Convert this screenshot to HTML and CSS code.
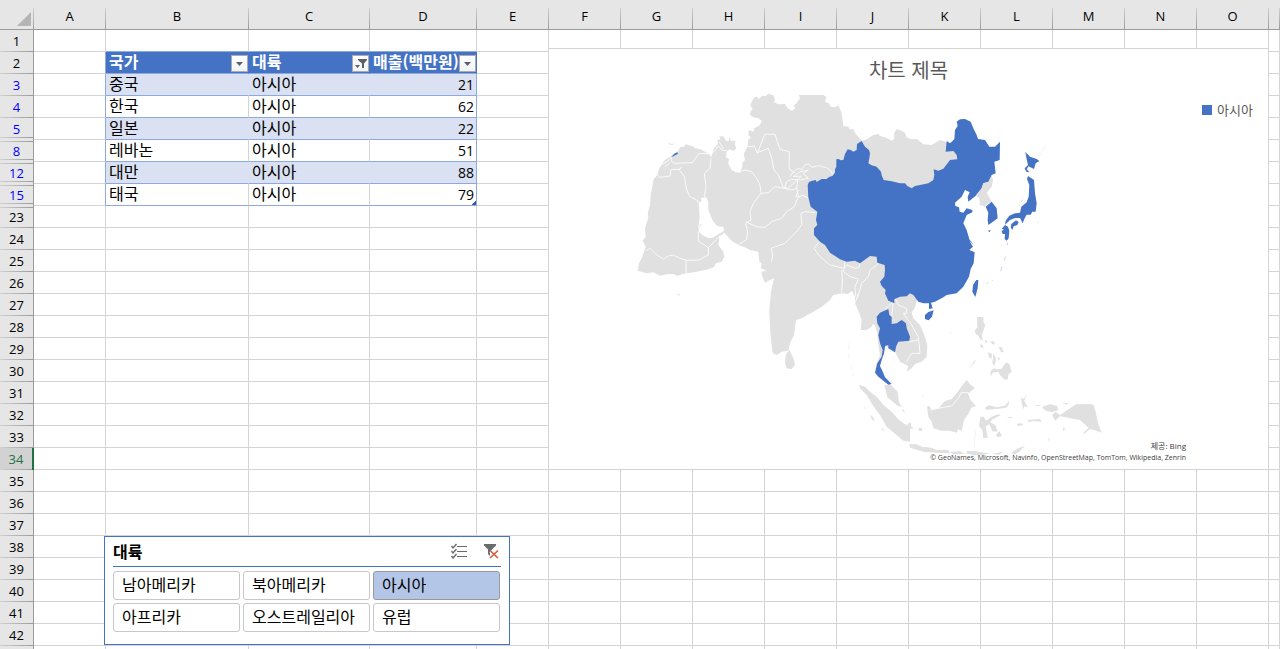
FILE: index.html
```html
<!DOCTYPE html>
<html lang="ko">
<head>
<meta charset="utf-8">
<title>대륙별 매출</title>
<link rel="stylesheet" href="styles.css">
</head>
<body>
<main class="sheet">
  <table class="grid">
    <colgroup id="cols"></colgroup>
    <thead><tr id="letters"></tr></thead>
    <tbody id="rows"></tbody>
  </table>

  <figure class="chart">
    <figcaption class="chart-title">차트 제목</figcaption>
    <div class="chart-body">
      <svg class="map" viewBox="12 39 1440 1104" role="img" aria-label="아시아 지도">
        <g class="land">
          <path d="M38,572 42,550 50,535 58,512 62,503 60,495 53,482 62,470 60,445 65,430 70,412 68,400 75,375 77,345 82,320 85,300 97,284 103,265 110,253 120,240 138,228 160,212 166,202 176,200 184,192 190,196 202,198 210,205 225,207 240,215 252,222 258,232 262,222 266,206 280,190 276,180 286,178 283,168 297,170 300,178 305,184 312,182 313,170 318,183 332,182 329,192 334,205 325,213 314,208 305,215 303,232 312,237 310,250 318,268 330,276 345,278 352,262 352,248 360,240 356,222 368,200 370,180 377,172 370,165 372,150 385,155 388,145 405,135 410,122 400,115 385,112 375,105 376,95 383,88 376,75 383,60 390,50 398,52 400,58 412,47 422,48 430,41 445,46 450,60 447,67 460,73 480,72 488,85 500,92 508,88 510,82 505,78 515,70 520,60 525,58 522,45 595,45 604,50 600,66 612,70 617,80 630,82 640,76 650,100 653,120 655,138 670,140 674,148 685,148 690,158 695,165 710,182 725,178 745,165 760,162 765,168 780,172 800,182 808,176 807,160 815,147 825,150 840,158 845,172 857,178 875,177 895,193 920,195 945,180 963,185 1000,230 980,500 875,663 870,682 860,698 865,715 885,735 898,765 907,795 905,830 890,845 870,852 860,865 845,875 850,858 825,845 815,825 810,815 790,805 785,798 780,805 777,820 770,840 750,875 755,850 765,825 760,795 757,760 750,735 744,732 740,740 725,750 707,750 710,720 703,700 690,670 690,650 680,632 670,642 650,640 625,645 615,660 590,680 565,695 530,715 513,720 507,765 495,790 490,812 470,815 455,825 443,820 437,770 435,740 433,690 438,635 447,595 435,600 420,608 410,585 410,575 425,572 407,565 410,550 403,545 400,515 375,510 360,502 345,497 320,483 298,458 292,464 279,470 283,478 280,495 295,515 298,530 290,545 272,550 268,560 250,568 215,575 185,580 155,587 145,582 125,583 105,587 85,577 65,580 Z"/>
          <path d="M130,188 138,191 150,191 141,195 132,193ZM155,642 161,642 168,647 160,646ZM493,810 505,835 510,855 500,868 485,865 480,850 482,825Z"/>
        </g>
        <path class="sea" d="M221,368 230,363 228,354 244,352 250,365 250,390 262,420 275,437 295,441 298,452 285,460 262,473 250,474 235,467 221,455 222,444 231,432 226,433 219,450 222,430 224,410Z"/>
        <g class="borders">
          <path d="M62,513 75,505 90,520 115,538 130,528 145,525 165,535 185,541 222,540 250,525 250,503 278,475M183,540V580M220,455V483L250,503M97,285 105,292 135,288 138,268 162,268 170,262M138,225 140,245 150,250 202,248 222,220 258,222M108,255 130,242 140,230M120,260 135,248M162,268 178,290 185,330 195,350 215,360 222,370M258,235 255,265 238,280 243,320 238,352M264,218 280,198 290,210 305,212M283,185 295,207"/>
          <path d="M345,275 360,270 380,275 395,295 405,315 408,340 385,370 375,395 378,420 362,430 368,455 365,478 340,495M408,340 430,338 450,320 478,325 500,330 515,325 520,350 508,380 485,395 470,415 440,425 420,442 395,440 362,425M440,545 443,525 438,505 460,497 480,490 510,460 530,435 528,400 540,395 570,398M370,200 388,198 397,220 420,162 450,163 465,208 493,215 492,260 495,270 510,278M397,218 418,210 430,205 440,235 447,270 460,285 475,322"/>
          <path d="M495,290 505,275 520,265 530,268 540,255 552,252 560,262 580,257 605,263 620,275 622,284M478,325 485,305 500,298 525,300 550,295 535,280 550,270 525,275 505,290 530,288 520,296M475,322 490,325 515,300M515,325 518,300M515,352 535,346 550,355M512,352 520,330"/>
          <path d="M582,485 567,505 585,530 615,555 657,565 660,545M657,565 665,555 690,565 702,563 704,550M650,570 652,600 650,640M657,566 655,575 675,590 700,597 690,620 692,650M697,655 710,610 730,590 735,570 755,555 768,545M810,655 820,675 845,685 845,700 835,700 860,735 880,770 885,820 860,820 845,845M853,785 880,780M780,688 805,665 800,712M690,670 700,640"/>
        </g>
        <path class="hit" d="M548,315 552,306 560,303 572,300 575,306 590,297 605,297 612,291 622,288 630,278 630,268 634,260 634,238 641,237 647,241 655,240 660,222 668,208 677,210 685,215 695,210 696,192 710,183 720,200 732,210 735,220 733,235 730,250 740,256 755,260 768,275 770,286 776,300 800,304 825,310 840,310 847,318 860,325 870,318 885,315 910,310 925,300 928,285 926,268 940,272 955,266 966,252 975,240 997,238 995,225 985,213 962,215 965,183 975,190 988,178 990,150 998,138 995,125 1005,118 1020,117 1037,125 1045,145 1055,165 1059,177 1080,180 1093,200 1110,200 1125,185 1124,240 1108,245 1112,280 1100,285 1092,305 1075,310 1070,325 1055,345 1030,365 1028,350 1034,337 1020,330 1010,350 990,368 991,378 1002,382 1004,395 1015,398 1025,385 1042,390 1042,397 1025,405 1015,430 1025,450 1033,478 1047,495 1033,482 1044,500 1033,510 1049,517 1046,550 1037,567 1032,590 1015,620 995,640 965,645 955,652 930,665 918,668 923,685 912,687 912,670 895,670 880,665 865,645 855,640 845,649 825,650 808,658 808,670 790,662 780,640 782,630 770,618 765,605 778,590 780,570 779,555 757,548 755,530 735,528 705,550 690,542 665,545 645,538 615,518 600,495 585,485 567,465 567,445 577,435 573,420 577,395 557,380 550,352Z"/>
        <path class="hit" d="M755,710 765,698 790,687 793,705 800,710 800,732 815,730 830,720 843,730 845,745 855,770 853,782 820,785 813,800 810,817 790,805 790,795 780,798 777,820 770,840 765,858 772,872 780,892 800,912 790,914 775,902 760,890 750,878 757,850 770,830 773,810 765,790 760,765 765,745 757,730Z"/>
        <path class="hit" d="M138,231 150,220 158,217 158,222 145,229ZM926,691 921,710 911,721 900,717 900,705 910,696Z"/>
        <g transform="translate(825 60)">
          <path class="land" d="M275,225 279,240 275,260 260,278 275,305 262,312 255,320 240,315 238,295 228,285 245,265 250,250 265,245Z"/>
          <path class="hit" d="M275,305 290,325 293,355 282,363 265,375 263,360 265,338 257,320ZM264,392 272,390 269,397ZM376,156 390,170 410,177 418,183 407,190 402,207 385,199 378,213 374,205 384,195 380,178ZM374,206 382,209 388,217 380,216ZM384,228 402,240 405,280 410,310 407,335 397,335 392,344 380,344 374,355 368,370 360,354 345,354 330,360 315,374 317,362 328,347 345,340 360,338 364,320 380,307 386,290 388,255 381,237ZM334,372 348,361 356,366 352,375 341,379 337,390 332,382ZM305,387 315,375 324,380 328,392 326,415 320,422 314,417 315,402 308,402 305,394 312,388ZM229,540 235,540 233,565 226,591 217,575 219,555Z"/>
          <path class="specks" d="M322,427V436M317,470 312,482M306,500 302,513M259,551 265,547M275,543 278,541M364,305 368,299M415,367 412,366"/>
          <path class="faint" d="M419,169 425,158 431,146 437,136"/>
        </g>
        <g class="land" transform="translate(675 570)">
          <path d="M103,345 123,345 143,365 147,395 155,412 140,405 112,382ZM28,344 45,350 60,365 80,380 100,405 125,425 145,448 160,460 180,472 180,515 160,512 140,495 110,470 90,435 70,408 50,375 30,355ZM231,410 238,408 245,420 268,415 275,403 285,393 305,387 325,363 338,345 350,330 362,345 375,354 365,362 354,370 360,388 378,409 365,412 355,432 342,450 335,483 325,478 320,488 300,482 275,482 250,475 245,455 235,440ZM178,523 200,523 215,530 245,533 260,540 295,540 300,550 260,548 220,545 180,533Z"/>
          <path d="M150,418 156,423 160,418 165,428ZM172,462 182,457 184,470 192,475 180,477 173,468ZM205,475 216,474 216,482 208,483ZM43,410 48,418 43,415ZM62,435 70,442 73,455 63,444ZM93,470 105,483 97,480ZM215,378 220,378 219,382ZM297,187 305,187 301,190ZM300,546 330,544 345,552 310,553ZM350,543 376,543 400,548 380,555 350,551Z"/>
          <path class="borders" d="M240,420 280,412 305,408 327,382 333,368 355,368"/>
        </g>
        <g class="land" transform="translate(1005 660)">
          <path d="M51,50 71,52 70,65 76,75 70,92 65,105 69,120 60,118 56,108 47,102 44,92 52,82ZM60,132 68,135 71,145 62,142ZM75,120 83,124 77,130ZM90,125 100,123 106,132 100,134ZM115,140 126,142 131,157 124,157ZM84,157 96,162 94,178 87,172ZM100,160 108,176 104,197 97,190 99,176ZM112,172 120,174 116,184ZM92,213 102,205 112,208 125,206 138,187 148,192 155,216 146,222 142,240 132,237 120,225 115,215 98,218 91,230ZM48,178 45,186 24,210 43,183Z"/>
          <path d="M74,325 85,316 110,322 135,317 147,302 146,314 138,323 110,327 80,329ZM61,350 71,350 78,362 95,350 115,343 123,345 100,357 90,366 106,376 113,395 97,394 88,373 77,379 83,414 70,415 67,390 57,379ZM108,405 118,393 126,408 113,412ZM183,292 190,298 200,285 193,302 204,323 194,318 190,328 185,308ZM170,371 185,370 190,375 174,378ZM204,360 240,357 246,365 220,363 205,367ZM247,320 270,313 292,318 294,331 276,336 260,333 249,326ZM276,345 287,335 300,345 330,325 350,312 400,313 407,335 414,370 425,398 405,391 390,387 372,402 371,397 386,384 360,360 330,355 300,349 285,362ZM305,309 324,309 320,314ZM312,378 314,390 308,394ZM227,314 245,316 230,319ZM140,352 162,351 150,355ZM30,460 60,457 90,460 65,466 35,466ZM95,462 130,455 118,464ZM155,457 175,445 195,438 178,455 162,465ZM264,418 270,413 266,424Z"/>
        </g>
        <path class="faint" d="M674,788 670,808M671,820 672,835M678,858 682,870M683,880 685,888M1047,1102 1052,1050"/>
      </svg>
      <div class="legend"><span class="swatch"></span>아시아</div>
      <div class="credits">
        <span class="provider">제공: Bing</span>
        <span>© GeoNames, Microsoft, Navinfo, OpenStreetMap, TomTom, Wikipedia, Zenrin</span>
      </div>
    </div>
  </figure>

  <section class="slicer" aria-labelledby="slicer-title">
    <header class="slicer-head">
      <h2 id="slicer-title">대륙</h2>
      <button class="tool" type="button" aria-label="다중 선택">
        <svg width="17" height="16" viewBox="0 0 17 16" fill="none" stroke="#6b6b6b"><path d="M6 3.500H16M6 8.500H16M6 13.500H16" stroke-width="1.200"/><path d="M.5 3 2 5 5.500 1M.5 8 2 10 5.500 6M.5 13 2 15 5.500 11" stroke-width="1.400"/></svg>
      </button>
      <button class="tool" type="button" aria-label="필터 지우기">
        <svg width="17" height="16" viewBox="0 0 17 16"><path d="M1 1H13V2.500L9 6.500V8L7 10V13L5 11V6.500L1 2.500Z" fill="#6b6b6b"/><path d="M7.500 8 15 15M15 8 7.500 15" stroke="#fff" stroke-width="3.500"/><path d="M7.500 8 15 15M15 7.500 7 15" stroke="#d6603c" stroke-width="1.700"/></svg>
      </button>
    </header>
    <div class="slicer-items">
      <button type="button">남아메리카</button>
      <button type="button">북아메리카</button>
      <button type="button" class="on" aria-pressed="true">아시아</button>
      <button type="button">아프리카</button>
      <button type="button">오스트레일리아</button>
      <button type="button">유럽</button>
    </div>
  </section>
</main>
<script src="sheet.js"></script>
</body>
</html>
```
FILE: styles.css
```css
* { box-sizing: border-box; }

:root {
  --latin: "Open Sans", "Noto Sans CJK KR", sans-serif;
  --korean: "Noto Sans CJK KR", sans-serif;
  --blue: #4472c4;
  --blue-line: #8ea9db;
  --line: #d4d4d4;
  --head: #e6e6e6;
  --head-line: #9b9b9b;
}

body {
  margin: 0;
  height: 100vh;
  overflow: hidden;
  background: #fff;
  color: #000;
  font: 16px/19px var(--korean);
}

button { margin: 0; font: inherit; color: inherit; }

.sheet { position: relative; }

/* Cell grid */
.grid {
  width: 100%;
  table-layout: fixed;
  border-collapse: separate;
  border-spacing: 0;
}
.w-head { width: 34px; }
.w-std { width: 72px; }
.w-b { width: 143px; }
.w-c { width: 121px; }
.w-d { width: 107px; }

.grid th, .grid td { padding: 0; white-space: nowrap; }

.grid thead th {
  height: 30px;
  padding: 3px 1px 0 0;
  border-bottom: 1px solid var(--head-line);
  background: linear-gradient(#d0d0d0, var(--head-line)) right bottom / 1px 21px no-repeat var(--head);
  font: 13px/20px var(--latin);
}
.grid thead .corner { padding: 0 3px 3px 0; text-align: right; vertical-align: bottom; }
.corner svg { display: block; margin-left: auto; }

.grid tbody tr { height: 22px; }
.grid tbody th {
  position: relative;
  height: 22px;
  padding: 1px 0 0;
  border-right: 1px solid var(--head-line);
  background: linear-gradient(90deg, #d0d0d0, var(--head-line)) left bottom / 100% 1px no-repeat var(--head);
  font: 13px/19px var(--latin);
}
.grid tbody .filtered th { color: #00f; }
/* Paired rules mark where rows are hidden */
.grid tbody .gap th { background-position: left bottom 2px; }
.grid tbody .gap-after th::before {
  content: "";
  position: absolute;
  inset: 1px 0 auto;
  height: 1px;
  background: linear-gradient(90deg, #d0d0d0, var(--head-line));
}
.grid tbody .active th {
  border-right: 2px solid #217346;
  background-color: #d2d2d2;
  color: #217346;
}

.grid td {
  height: 22px;
  padding-bottom: 2px;
  border-right: 1px solid var(--line);
  border-bottom: 1px solid var(--line);
}
.grid .before td:nth-child(n+3):nth-child(-n+5) { border-bottom-color: var(--blue-line); }
.grid .record td:nth-child(2) { border-right-color: var(--blue-line); }
.grid .record td:nth-child(n+3):nth-child(-n+5) {
  padding: 0 0 2px 3px;
  border-bottom-color: var(--blue-line);
}
.grid .record td:nth-child(5) { border-right-color: var(--blue-line); }
.grid .band td:nth-child(n+3):nth-child(-n+5) { background: #d9e1f2; }
.grid .band td:nth-child(3), .grid .band td:nth-child(4) { border-right-color: #d9e1f2; }
.grid .record td.number:nth-child(5) {
  position: relative;
  padding: 0 2px 0 0;
  text-align: right;
  font: 14px/20px var(--latin);
}
.table-end::after {
  content: "";
  position: absolute;
  right: 0;
  bottom: 0;
  width: 4px;
  height: 4px;
  background: linear-gradient(135deg, transparent 45%, #3f55b5 45%);
}

.grid .titles td:nth-child(n+3):nth-child(-n+5) {
  padding: 0 0 0 3px;
  border-color: var(--blue);
  border-bottom-color: var(--blue-line);
  background: var(--blue);
  color: #fff;
  font-weight: 700;
}
.title { display: flex; justify-content: space-between; height: 21px; }
.drop {
  display: grid;
  place-items: center;
  flex: none;
  width: 17px;
  height: 17px;
  margin-top: 3px;
  padding: 0;
  border: 1px solid #ababab;
  background: linear-gradient(#fff, #f1f3f6);
}

/* Map chart */
.chart {
  position: absolute;
  left: 548px;
  top: 48px;
  width: 721px;
  margin: 0;
  padding-bottom: 8px;
  border: 1px solid #d4d4d4;
  background: #fff;
  color: #595959;
}
.chart-title { height: 44px; font-size: 20px; line-height: 42px; text-align: center; }
.chart-body { display: grid; grid-template-columns: 480px 1fr; padding-left: 80px; }
.map { grid-area: 1 / 1; display: block; width: 100%; }
.legend {
  grid-area: 1 / 2;
  display: flex;
  align-items: center;
  align-self: start;
  gap: 5px;
  margin: 7px 0 0 93px;
  font-size: 13px;
  line-height: 20px;
}
.swatch { width: 10px; height: 10px; background: var(--blue); }
.credits {
  grid-area: 1 / 1 / 2 / 3;
  display: grid;
  place-self: end;
  margin: 0 82px -3px 0;
  text-align: right;
  font: 7px/12px var(--latin);
  color: #404040;
}
.provider { font-size: 8px; }
.land { fill: #e0e0e0; }
.sea { fill: #fff; }
.hit { fill: var(--blue); }
.borders { fill: none; stroke: #fafafa; stroke-width: 3; stroke-linejoin: round; }
.specks { fill: none; stroke: #a9bde3; stroke-width: 2; }
.faint { fill: none; stroke: #ececec; stroke-width: 2; }

/* Slicer */
.slicer {
  position: absolute;
  left: 104px;
  top: 536px;
  width: 406px;
  padding: 0 8px 12px;
  border: 1px solid var(--blue);
  background: #fff;
}
.slicer-head {
  display: flex;
  align-items: center;
  gap: 15px;
  height: 30px;
  padding: 0 1px 2px 0;
  border-bottom: 1px solid var(--blue);
}
.slicer-head h2 { flex: 1; margin: 0; font-size: 16px; line-height: 26px; }
.tool { display: flex; padding: 0; border: 0; background: none; }
.slicer-items {
  display: grid;
  grid-template-columns: repeat(3, 1fr);
  gap: 3px;
  padding: 4px 1px 0 0;
}
.slicer-items button {
  height: 29px;
  padding: 0 0 2px 8px;
  border: 1px solid #c8c8c8;
  border-radius: 3px;
  background: #fff;
  line-height: 25px;
  text-align: left;
  white-space: nowrap;
}
.slicer-items .on { border-color: #999; background: #b4c6e7; }
```
FILE: sheet.js
```js
const columns = [..."ABCDEFGHIJKLMNOP"];
const widths = { B: "w-b", C: "w-c", D: "w-d" };
const records = {
  3: ["중국", "아시아", 21],
  4: ["한국", "아시아", 62],
  5: ["일본", "아시아", 22],
  8: ["레바논", "아시아", 51],
  12: ["대만", "아시아", 88],
  15: ["태국", "아시아", 79]
};
const titles = ["국가", "대륙", "매출(백만원)"];
const rowNumbers = [1, 2, 3, 4, 5, 8, 12, 15];
for (let n = 23; n <= 43; n++) rowNumbers.push(n);

const arrow = '<svg width="15" height="15" viewBox="0 0 15 15"><path d="M4 6H11L7.500 10Z" fill="#5c6066"/></svg>';
const funnel = '<svg width="15" height="15" viewBox="0 0 15 15"><path d="M5 3H14V4L11 7.500V12H9V7.500L5 4ZM2 9H7L4.500 12Z" fill="#5c6066"/></svg>';

document.getElementById("cols").innerHTML =
  '<col class="w-head">' +
  columns.map(c => c === "P" ? "<col>" : `<col class="${widths[c] || "w-std"}">`).join("");

document.getElementById("letters").innerHTML =
  '<th class="corner" aria-label="모두 선택"><svg width="14" height="14" viewBox="0 0 14 14"><path d="M14 0V14H0Z" fill="#b4b4b4"/></svg></th>' +
  columns.map(c => `<th scope="col">${c === "P" ? "" : c}</th>`).join("");

document.getElementById("rows").innerHTML = rowNumbers.map(n => {
  const record = records[n];
  const cls = [];
  if (n === 1) cls.push("before");
  if (n === 2) cls.push("record", "titles");
  if (record) cls.push("record", "filtered");
  if ([3, 5, 12].includes(n)) cls.push("band");
  if ([5, 8, 12, 15].includes(n)) cls.push("gap");
  if ([8, 12, 15, 23].includes(n)) cls.push("gap-after");
  if (n === 34) cls.push("active");

  const cells = columns.map((c, i) => {
    const k = i - 1;
    if (n === 2 && titles[k]) {
      return `<td><div class="title">${titles[k]}<button class="drop" type="button" aria-label="${titles[k]} 필터">${k === 1 ? funnel : arrow}</button></div></td>`;
    }
    if (record && k >= 0 && k < 3) {
      const type = k === 2 ? ` class="number${n === 15 ? " table-end" : ""}"` : "";
      return `<td${type}>${record[k]}</td>`;
    }
    return "<td></td>";
  }).join("");
  return `<tr class="${cls.join(" ")}"><th scope="row">${n === 43 ? "" : n}</th>${cells}</tr>`;
}).join("");
```
